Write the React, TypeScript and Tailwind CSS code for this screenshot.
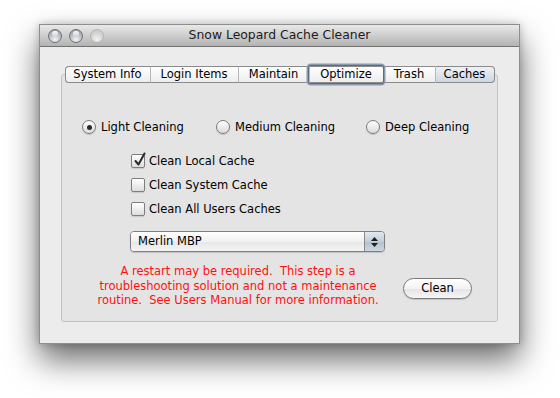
import React from "react";

const font = { fontFamily: '"DejaVu Sans", "Liberation Sans", sans-serif' };

function Light({ dim }: { dim?: boolean }) {
  return dim ? (
    <div className="h-[14px] w-[14px] rounded-full border border-[#b4b4b4] bg-[radial-gradient(circle_at_50%_75%,#f2f2f2,#d4d4d4_55%,#c2c2c2)]" />
  ) : (
    <div className="relative h-[14px] w-[14px] rounded-full border border-[#6f7278] bg-[radial-gradient(circle_at_50%_80%,#f4f5f7,#b6b9bf_55%,#8d9098)]">
      <div className="absolute left-[3px] top-[1px] h-[5px] w-[6px] rounded-full bg-[linear-gradient(#ffffff,#d8dade)] opacity-90" />
    </div>
  );
}

function Radio({ on, label, w }: { on?: boolean; label: string; w: string }) {
  return (
    <div className={`flex items-center gap-[5px] ${w}`}>
      <div className="flex h-[14px] w-[14px] items-center justify-center rounded-full border border-[#7c7c7c] bg-[linear-gradient(#fdfdfd,#dcdcdc)] shadow-[0_1px_1px_rgba(0,0,0,0.15)]">
        {on && <div className="h-[5px] w-[5px] rounded-full bg-[#2a2a2a]" />}
      </div>
      <span className="pt-[1px] text-[11.5px] leading-none text-black">{label}</span>
    </div>
  );
}

function Check({ on, label }: { on?: boolean; label: string }) {
  return (
    <div className="flex h-[16px] items-center gap-[4px]">
      <div className="relative h-[14px] w-[14px] rounded-[2px] border border-[#7e7e7e] bg-[linear-gradient(#ffffff,#dedede)] shadow-[0_1px_1px_rgba(0,0,0,0.12)]">
        {on && (
          <svg className="absolute left-[1px] top-[-3px]" width="13" height="15" viewBox="0 0 13 15">
            <path d="M2.5 9 L5.5 12.5 L11.5 1.5" fill="none" stroke="#2a2a2a" strokeWidth="2" strokeLinejoin="round" strokeLinecap="round" />
          </svg>
        )}
      </div>
      <span className="pt-[1px] text-[11.5px] leading-none text-black">{label}</span>
    </div>
  );
}

const tabs = [
  { t: "System Info", w: "w-[85px]" },
  { t: "Login Items", w: "w-[88px]" },
  { t: "Maintain", w: "w-[71px]" },
  { t: "Optimize", w: "w-[74px]" },
  { t: "Trash", w: "w-[52px]" },
  { t: "Caches", w: "w-[60px]" },
];

export default function App() {
  return (
    <div className="h-[398px] w-[560px] overflow-hidden bg-white pl-[39px] pt-[24px]" style={font}>
      <div className="flex h-[320px] w-[481px] flex-col border border-[#8e8e8e] bg-[#ececec] shadow-[0_16px_30px_rgba(0,0,0,0.58),0_0_8px_rgba(0,0,0,0.2)]">
        {/* title bar */}
        <div className="relative flex h-[22px] items-center border-b border-[#727272] bg-linear-to-b from-[#e9e9e9] to-[#b3b3b3]">
          <div className="flex gap-[7px] pl-[8px]">
            <Light />
            <Light />
            <Light dim />
          </div>
          <div className="absolute inset-0 flex items-center justify-center text-[12.4px] text-[#1c1c1c]">
            Snow Leopard Cache Cleaner
          </div>
        </div>

        {/* tabs */}
        <div className="relative z-10 flex justify-center pt-[19px]">
          {tabs.map((tab, i) => {
            const first = i === 0;
            const last = i === tabs.length - 1;
            const sel = tab.t === "Caches";
            const focus = tab.t === "Optimize";
            return (
              <div
                key={tab.t}
                className={`relative flex h-[17px] items-center justify-center border-y border-[#8b8b8b] pt-[1px] text-[11.5px] leading-none text-black ${tab.w} ${
                  first ? "rounded-l-[4px] border-l" : "border-l border-l-[#b8b8b8]"
                } ${last ? "rounded-r-[4px] border-r" : ""} ${
                  sel ? "bg-[linear-gradient(#eef2f7,#ccd6e2)]" : "bg-[linear-gradient(#ffffff,#ededed)]"
                } ${focus ? "z-10 rounded-[2px] shadow-[0_0_0_1px_#5d6c80,0_0_0_2.5px_#8a99ad]" : ""}`}
              >
                {tab.t}
              </div>
            );
          })}
        </div>

        {/* tab box */}
        <div className="mx-[21px] -mt-[9px] flex h-[248px] flex-col rounded-[3px] border border-[#c2c2c2] bg-[#e4e4e4]">
          <div className="mt-[44px] flex h-[16px] items-center pl-[20px]">
            <Radio on label="Light Cleaning" w="w-[134px]" />
            <Radio label="Medium Cleaning" w="w-[150px]" />
            <Radio label="Deep Cleaning" w="" />
          </div>

          <div className="mt-[18px] flex flex-col gap-[8px] pl-[69px]">
            <Check on label="Clean Local Cache" />
            <Check label="Clean System Cache" />
            <Check label="Clean All Users Caches" />
          </div>

          <div className="ml-[68px] mt-[14px] flex h-[21px] w-[255px] overflow-hidden rounded-[4px] border border-[#7f7f7f] shadow-[0_1px_1px_rgba(0,0,0,0.15)]">
            <div className="flex flex-1 items-center bg-[linear-gradient(#ffffff,#f0f0f0_50%,#e6e6e6_51%,#f4f4f4)] pl-[7px] pt-[1px] text-[11.5px] leading-none text-black">
              Merlin MBP
            </div>
            <div className="flex w-[20px] flex-col items-center justify-center gap-[2px] border-l border-[#8a8a8a] bg-[linear-gradient(#e2e8ef,#c3cedb_50%,#b3c0cf_51%,#cdd6e2)]">
              <svg width="7" height="4" viewBox="0 0 7 4"><path d="M3.5 0 L7 4 L0 4 Z" fill="#1e1e1e" /></svg>
              <svg width="7" height="4" viewBox="0 0 7 4"><path d="M0 0 L7 0 L3.5 4 Z" fill="#1e1e1e" /></svg>
            </div>
          </div>

          <div className="flex items-start">
            <div className="ml-[26px] mt-[12px] w-[300px] text-center text-[11.5px] leading-[14.5px] text-[#ff1010]">
              <div className="whitespace-pre">A restart may be required.  This step is a</div>
              <div className="whitespace-pre">troubleshooting solution and not a maintenance</div>
              <div className="whitespace-pre">routine.  See Users Manual for more information.</div>
            </div>
            <div className="ml-[15px] mt-[26px] flex h-[21px] w-[69px] items-center justify-center rounded-full border border-[#7a7a7a] bg-[linear-gradient(#ffffff,#f3f3f3_50%,#e4e4e4_51%,#f6f6f6)] pt-[1px] text-[11.5px] leading-none text-black shadow-[0_1px_1px_rgba(0,0,0,0.15)]">
              Clean
            </div>
          </div>
        </div>
      </div>
    </div>
  );
}
